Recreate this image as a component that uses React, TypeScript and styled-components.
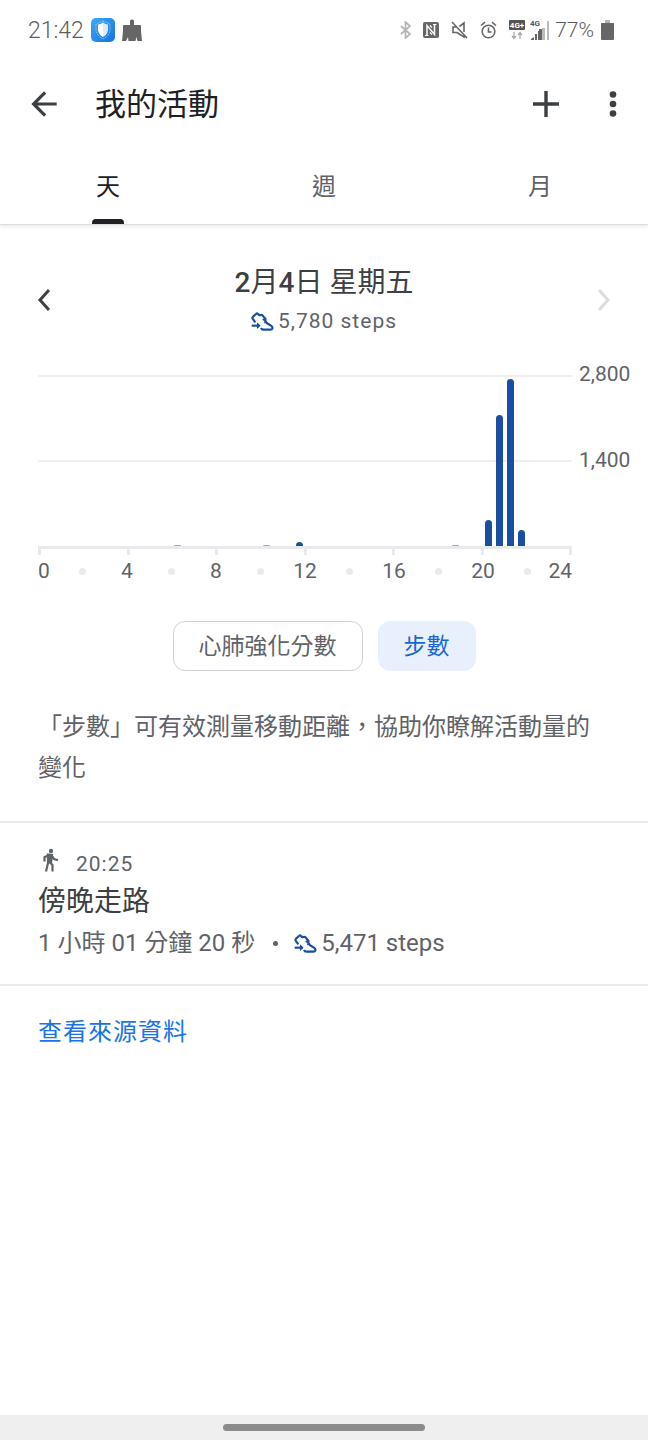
import React from 'react';
import styled, { createGlobalStyle, css } from 'styled-components';

const GlobalStyle = createGlobalStyle`
  *, *::before, *::after { box-sizing: border-box; }
  html, body, #root { height: 100%; }
  body {
    margin: 0;
    background: #fff;
    color: #5f6368;
    font-family: Roboto, "Noto Sans CJK TC", sans-serif;
    font-size: 24px;
  }
  button { font: inherit; color: inherit; background: none; border: 0; padding: 0; cursor: pointer; }
  h1, h2, h3, p { margin: 0; font-weight: 400; }
  svg { display: block; flex: none; }
`;

const Screen = styled.div`
  min-height: 100%;
  display: flex;
  flex-direction: column;
`;

const StatusBar = styled.div`
  display: flex;
  justify-content: space-between;
  align-items: center;
  height: 60px;
  padding: 0 34px 0 28px;
  color: #5c5c5c;
`;

const StatusGroup = styled.div<{ $gap: number }>`
  display: flex;
  align-items: center;
  gap: ${(p) => p.$gap}px;
`;

const Clock = styled.span`
  font-size: 23px;
  font-weight: 300;
`;

const BatteryLevel = styled.span`
  font-size: 21px;
  font-weight: 300;
`;

const AppBar = styled.header`
  display: flex;
  align-items: center;
  height: 88px;
  padding: 0 15px 0 24px;
`;

const Title = styled.h1`
  flex: 1;
  margin-left: 31px;
  padding-top: 2px;
  font-size: 31px;
  line-height: 40px;
  color: #202124;
`;

const IconButton = styled.button<{ $muted?: boolean }>`
  display: grid;
  place-items: center;
  width: 40px;
  height: 40px;
  color: ${(p) => (p.$muted ? '#dadce0' : '#3c4043')};
`;

const AppActions = styled.div`
  display: flex;
  gap: 27px;
`;

const Tabs = styled.nav`
  display: grid;
  grid-template-columns: repeat(3, 1fr);
  height: 77px;
  border-bottom: 1px solid #dadce0;
  box-shadow: 0 2px 4px rgba(0, 0, 0, 0.08);
`;

const Tab = styled.button<{ $active?: boolean }>`
  display: flex;
  flex-direction: column;
  align-items: center;
  justify-content: space-between;
  padding-top: 21px;
  line-height: 36px;
  color: ${(p) => (p.$active ? '#202124' : '#5f6368')};

  &::after {
    content: '';
    width: 32px;
    height: 5px;
    border-radius: 4px 4px 0 0;
    background: ${(p) => (p.$active ? '#202124' : 'transparent')};
  }
`;

const DayNav = styled.section`
  display: flex;
  align-items: center;
  justify-content: space-between;
  padding: 38px 24px 0;
  height: 112px;
`;

const DaySummary = styled.div`
  display: flex;
  flex-direction: column;
  align-items: center;
`;

const DayTitle = styled.h2`
  font-size: 28px;
  line-height: 42px;
  color: #3c4043;

  b { font-weight: 500; }
`;

const Steps = styled.span<{ $small?: boolean }>`
  display: inline-flex;
  align-items: center;
  gap: 4px;
  ${(p) =>
    p.$small &&
    css`
      font-size: 21px;
      line-height: 34px;
      letter-spacing: 1px;
    `}
`;

const Chart = styled.section`
  display: grid;
  grid-template-columns: minmax(0, 1fr) 51px;
  column-gap: 7px;
  padding: 38px 18px 0 38px;
  font-size: 21px;
`;

const Plot = styled.div`
  display: grid;
  grid-template-columns: repeat(48, minmax(0, 1fr));
  align-items: end;
  justify-items: center;
  height: 171px;
  background:
    linear-gradient(#eeeff1, #eeeff1) 0 0 / 100% 2px no-repeat,
    linear-gradient(#eeeff1, #eeeff1) 0 50% / 100% 2px no-repeat;
`;

const Bar = styled.div<{ $faint: boolean }>`
  width: 7px;
  border-radius: 4px 4px 0 0;
  background: ${(p) => (p.$faint ? '#8fa9d3' : '#1a4ea2')};
`;

const ScaleLabels = styled.div`
  display: grid;
  grid-template-rows: 1fr 1fr;
  line-height: 24px;
  margin-top: -13px;
  margin-bottom: 13px;
  text-align: right;
`;

const Ticks = styled.div`
  display: flex;
  justify-content: space-between;
  height: 9px;
  border-top: 3px solid #e8eaed;

  i { width: 3px; background: #e8eaed; }
`;

const HourLabels = styled.div`
  grid-column: 1;
  display: grid;
  grid-template-columns: repeat(24, minmax(0, 1fr));
  align-items: center;
  line-height: 32px;
`;

const Hour = styled.span<{ $index: number }>`
  grid-row: 1;
  ${(p) =>
    p.$index === 0
      ? 'grid-column: 1 / span 2; justify-self: start;'
      : p.$index === 12
        ? 'grid-column: 23 / span 2; justify-self: end;'
        : `grid-column: ${p.$index * 2} / span 2; justify-self: center;`}
`;

const HourDot = styled(Hour)`
  width: 7px;
  height: 7px;
  border-radius: 50%;
  background: #e8eaed;
`;

const Chips = styled.div`
  display: flex;
  justify-content: center;
  gap: 15px;
  padding-top: 34px;
`;

const Chip = styled.button<{ $selected?: boolean }>`
  height: 50px;
  padding: 2px 25px 0;
  border: 1px solid ${(p) => (p.$selected ? '#e8f0fe' : '#cfd1d5')};
  border-radius: 12px;
  background: ${(p) => (p.$selected ? '#e8f0fe' : '#fff')};
  color: ${(p) => (p.$selected ? '#1967d2' : '#5f6368')};
  font-size: 23px;
  line-height: 44px;
`;

const Description = styled.p`
  padding: 36px 38px 32px;
  line-height: 41px;
`;

const Session = styled.article`
  display: flex;
  flex-direction: column;
  padding: 24px 38px 21px;
  border: solid #e8eaec;
  border-width: 2px 0;
`;

const SessionTime = styled.div`
  display: flex;
  align-items: flex-start;
  gap: 14px;
  font-size: 21px;
  line-height: 34px;
  letter-spacing: 1px;
`;

const SessionTitle = styled.h3`
  font-size: 28px;
  line-height: 42px;
  color: #3c4043;
`;

const SessionDetails = styled.div`
  display: flex;
  align-items: center;
  line-height: 40px;
`;

const Separator = styled.span`
  width: 5px;
  height: 5px;
  margin: 0 16px 0 18px;
  border-radius: 50%;
  background: #5f6368;
`;

const SourceLink = styled.a`
  align-self: flex-start;
  margin: 28px 38px;
  line-height: 36px;
  letter-spacing: 1px;
  color: #1a73e8;
  text-decoration: none;
`;

const GestureBar = styled.footer`
  display: grid;
  place-items: center;
  height: 25px;
  margin-top: auto;
  background: #efefef;

  &::before {
    content: '';
    width: 202px;
    height: 7px;
    border-radius: 4px;
    background: #8b8b8b;
  }
`;

const ShoeIcon = () => (
  <svg width="23" height="19" viewBox="0 0 69 57" fill="none" stroke="#1a4ea2" strokeWidth="6.500" strokeLinejoin="round" aria-hidden="true">
    <path d="M13 31 5 20Q3 17 6 14L15 6Q18 3 21 6 24 10 30 9 34 8 36 12L42 19Q45 22 42 25L46 31Q48 34 52 36L60 41Q66 45 64 50 63 53 58 53H37Q32 53 30 48" />
    <path d="M2 41H24" />
    <path d="M18 31 29 41 18 51Z" fill="#1a4ea2" stroke="none" />
    <path d="M35 24 42 20M40 32 46 29" strokeWidth="5" />
  </svg>
);

const WalkIcon = () => (
  <svg width="24" height="25" viewBox="0 0 24 25" fill="none" stroke="#5f6368" strokeWidth="2.200" aria-hidden="true">
    <circle cx="13" cy="4" r="2.200" fill="#5f6368" stroke="none" />
    <path d="M10 7.500 14 8 13 15.500 10 15Z" fill="#5f6368" />
    <path d="M11 8 6.500 10.200V14.500M13.500 8.500 16 12 20 13.200M10.500 14 8 24.500M12 15.500 14.500 18V24.500" />
  </svg>
);

const ShieldIcon = () => (
  <svg width="24" height="24" viewBox="0 0 24 24" aria-hidden="true">
    <defs>
      <linearGradient id="shield-tile" x1="0" y1="0" x2="1" y2="1">
        <stop offset="0" stopColor="#3fa9f5" />
        <stop offset="1" stopColor="#1673e0" />
      </linearGradient>
    </defs>
    <rect width="24" height="24" rx="5" fill="url(#shield-tile)" />
    <path d="M12 3 19 6V12Q18 18 12 21 6 18 5 12V6Z" fill="none" stroke="#a9d6ff" strokeDasharray="1 1" />
    <path d="M12 4.500Q14.500 6.500 17 6.500V12Q16.500 16.500 12 19Z" fill="#d9ecff" />
    <path d="M12 4.500Q9.500 6.500 7 6.500V12Q7.500 16.500 12 19Z" fill="#fff" />
  </svg>
);

const BroomIcon = () => (
  <svg width="20" height="22" viewBox="0 0 20 22" fill="#666" aria-hidden="true">
    <path d="M8 1.500Q10 -.5 12 1.500V6H18Q19 6 19 7V12L20 22H15.500L14.500 18 13.500 22H6.500L6 18 4 22H0L1 12V7Q1 6 2 6H8Z" />
  </svg>
);

const StatusIcons = () => (
  <>
    <svg width="11" height="18" viewBox="0 0 11 18" fill="none" stroke="#b5b5b5" strokeWidth="1.700" aria-hidden="true">
      <path d="M1 5 10 13 5.500 17V1L10 5 1 13" />
    </svg>
    <svg width="16" height="16" viewBox="0 0 16 16" aria-hidden="true">
      <rect width="16" height="16" rx="2" fill="#666" />
      <path d="M4 13.500V3.500L11.500 12.500V2.500" fill="none" stroke="#fff" strokeWidth="1.500" />
      <path d="M2 13.500H5.500M10 2.500H13.500M7 3.500 9 5.500M7 10.500 9 12.500" fill="none" stroke="#fff" strokeWidth="1.200" />
    </svg>
    <svg width="17" height="18" viewBox="0 0 17 18" fill="none" stroke="#666" strokeWidth="1.600" aria-hidden="true">
      <path d="M1 1 16 17M5 6H2V11.500H6L13 16V14M13 11V2L8.500 5.500" />
    </svg>
    <svg width="17" height="18" viewBox="0 0 17 18" fill="none" stroke="#666" strokeWidth="1.600" aria-hidden="true">
      <circle cx="8.500" cy="10.500" r="6.300" />
      <path d="M8.500 6.500V11H11.500M1 4.500 5 1.200M16 4.500 12 1.200" />
    </svg>
    <svg width="16" height="20" viewBox="0 0 16 20" aria-hidden="true">
      <rect width="16" height="10" rx="1" fill="#555" />
      <text x="8" y="8" fill="#fff" fontSize="8" fontWeight="700" textAnchor="middle">4G+</text>
      <path d="M5 12V18M3 16 5 18.500 7 16M11 19V13M9 15 11 12.500 13 15" fill="none" stroke="#aaa" strokeWidth="1.300" />
    </svg>
  </>
);

const SignalIcon = () => (
  <svg width="20" height="20" viewBox="0 0 20 20" aria-hidden="true">
    <text x="0" y="6" fill="#555" fontSize="8" fontWeight="700">4G</text>
    <path d="M1 19 4 17V20H1ZM5 14H7V20H5ZM8 11H11V20H8Z" fill="#666" />
    <path d="M12 8H15V20H12ZM17 1H19V20H17Z" fill="#bbb" />
    <path d="M9 9H12V20H9Z" fill="#666" />
  </svg>
);

const BatteryIcon = () => (
  <svg width="13" height="20" viewBox="0 0 13 20" aria-hidden="true">
    <path d="M4 0H9V3H13V6H0V3H4Z" fill="#b5b5b5" />
    <rect y="3" width="13" height="17" rx="1" fill="#666" />
  </svg>
);

const ChevronIcon = ({ right }: { right?: boolean }) => (
  <svg width="14" height="24" viewBox="0 0 14 24" fill="none" stroke="currentColor" strokeWidth="3" aria-hidden="true">
    <path d={right ? 'M2 2 11 12 2 22' : 'M12 2 3 12 12 22'} />
  </svg>
);

const SLOT_STEPS: Record<number, number> = {
  12: 18, 20: 18, 23: 70, 37: 18, 40: 430, 41: 2150, 42: 2730, 43: 264,
};
const SCALE_MAX = 2800;
const FAINT_BELOW = 30;
const slots = Array.from({ length: 48 }, (_, i) => SLOT_STEPS[i] ?? 0);
const marks = Array.from({ length: 13 }, (_, i) => i);

const ActivityChart = () => (
  <Chart aria-label="步數">
    <Plot>
      {slots.map((value, i) => (
        <Bar key={i} $faint={value < FAINT_BELOW} style={{ height: `${(value / SCALE_MAX) * 100}%` }} />
      ))}
    </Plot>
    <ScaleLabels>
      <span>2,800</span>
      <span>1,400</span>
    </ScaleLabels>
    <Ticks>
      {marks.filter((m) => m % 2 === 0).map((m) => <i key={m} />)}
    </Ticks>
    <HourLabels>
      {marks.map((m) =>
        m % 2 === 0 ? <Hour key={m} $index={m}>{m * 2}</Hour> : <HourDot key={m} $index={m} />,
      )}
    </HourLabels>
  </Chart>
);

export default function App() {
  return (
    <Screen>
      <GlobalStyle />
      <StatusBar>
        <StatusGroup $gap={7}>
          <Clock>21:42</Clock>
          <ShieldIcon />
          <BroomIcon />
        </StatusGroup>
        <StatusGroup $gap={5}>
          <StatusGroup $gap={12}>
            <StatusIcons />
          </StatusGroup>
          <SignalIcon />
          <StatusGroup $gap={7}>
            <BatteryLevel>77%</BatteryLevel>
            <BatteryIcon />
          </StatusGroup>
        </StatusGroup>
      </StatusBar>

      <AppBar>
        <IconButton aria-label="返回">
          <svg width="38" height="38" viewBox="0 0 24 24" fill="currentColor" aria-hidden="true">
            <path d="M20 11H7.830l5.590-5.590L12 4l-8 8 8 8 1.410-1.410L7.830 13H20v-2z" />
          </svg>
        </IconButton>
        <Title>我的活動</Title>
        <AppActions>
          <IconButton aria-label="新增">
            <svg width="26" height="26" viewBox="0 0 26 26" fill="none" stroke="currentColor" strokeWidth="3.400" aria-hidden="true">
              <path d="M13 0V26M0 13H26" />
            </svg>
          </IconButton>
          <IconButton aria-label="更多選項">
            <svg width="8" height="26" viewBox="0 0 8 26" fill="currentColor" aria-hidden="true">
              <circle cx="4" cy="3.500" r="3.300" />
              <circle cx="4" cy="13" r="3.300" />
              <circle cx="4" cy="22.500" r="3.300" />
            </svg>
          </IconButton>
        </AppActions>
      </AppBar>

      <Tabs>
        <Tab $active aria-current="page">天</Tab>
        <Tab>週</Tab>
        <Tab>月</Tab>
      </Tabs>

      <main>
        <DayNav>
          <IconButton aria-label="前一天"><ChevronIcon /></IconButton>
          <DaySummary>
            <DayTitle><b>2</b>月<b>4</b>日 星期五</DayTitle>
            <Steps $small><ShoeIcon />5,780 steps</Steps>
          </DaySummary>
          <IconButton $muted aria-label="後一天"><ChevronIcon right /></IconButton>
        </DayNav>

        <ActivityChart />

        <Chips>
          <Chip>心肺強化分數</Chip>
          <Chip $selected aria-pressed="true">步數</Chip>
        </Chips>
        <Description>「步數」可有效測量移動距離，協助你瞭解活動量的變化</Description>

        <Session>
          <SessionTime><WalkIcon />20:25</SessionTime>
          <SessionTitle>傍晚走路</SessionTitle>
          <SessionDetails>
            <span>1 小時 01 分鐘 20 秒</span>
            <Separator />
            <Steps><ShoeIcon />5,471 steps</Steps>
          </SessionDetails>
        </Session>
      </main>
      <SourceLink href="#sources">查看來源資料</SourceLink>
      <GestureBar />
    </Screen>
  );
}
